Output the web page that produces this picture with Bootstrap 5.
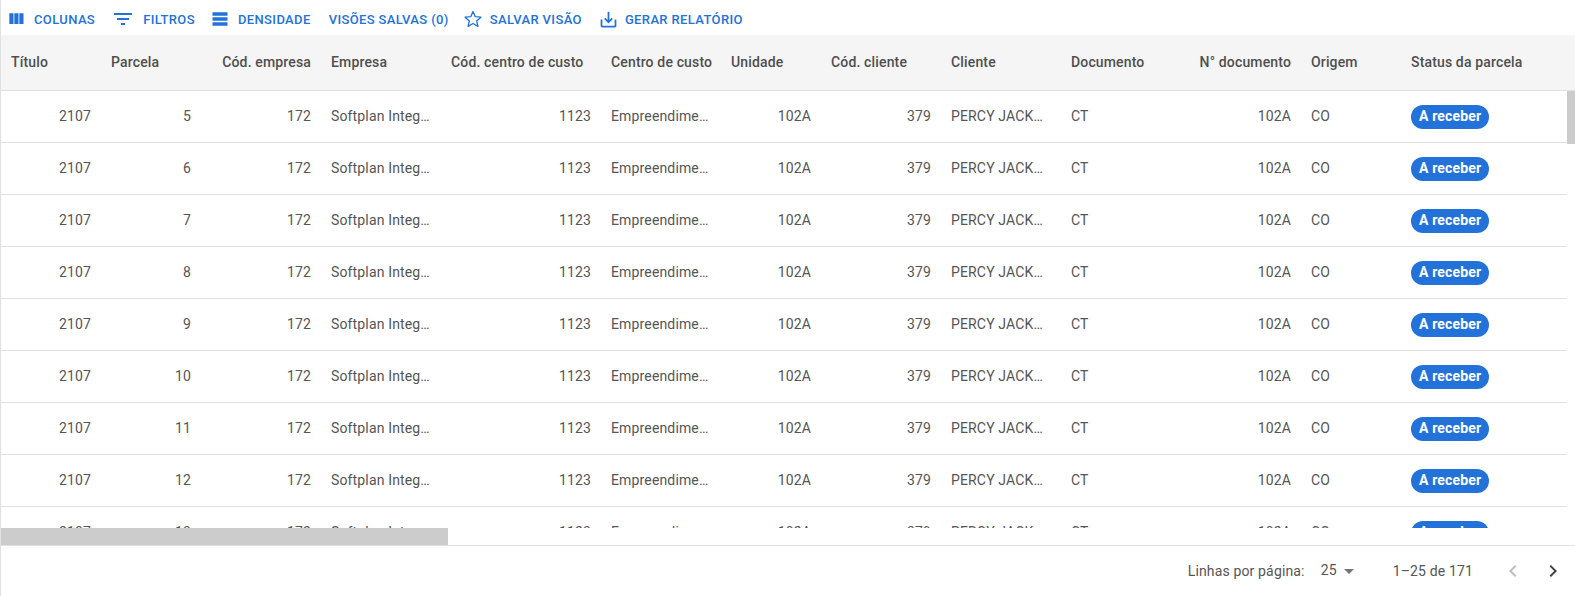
<!DOCTYPE html>
<html lang="pt-BR">
<head>
  <meta charset="UTF-8" />
  <meta name="viewport" content="width=device-width, initial-scale=1.0"/>
  <title>Parcelas</title>
  <link href="https://cdn.jsdelivr.net/npm/bootstrap@5.3.0/dist/css/bootstrap.min.css" rel="stylesheet"/>
  <style>
    html, body { height: 100%; overflow: hidden; }
    body { background: #fff; font-family: Roboto, "Liberation Sans", sans-serif; font-size: 14px; letter-spacing: .15px; color: #555; }
    .grid-root { height: 596px; border-left: 1px solid #e0e0e0; }
    .grid-toolbar { height: 35px; padding: 3px 0 0 5px; }
    .tool-btn { border: 0; background: none; padding: 0; color: #2272d9; font-size: 13px; font-weight: 500; letter-spacing: .37px; text-transform: uppercase; line-height: 1; }
    .tool-btn svg { fill: currentColor; display: block; flex: none; margin-right: 8px; }
    .tool-btn svg.star-line { fill: none; stroke: currentColor; stroke-width: 1.6; stroke-linejoin: round; margin-right: 7px; }
    .tool-btn svg.save-icon { margin-right: 6px; }
    .tool-gap { margin-left: 16px; }
    .tool-gap-md { margin-left: 15px; }
    .tool-gap-lg { margin-left: 18px; }
    .tool-gap-sm { margin-left: 14px; }
    .grid-head { height: 56px; background: #f5f5f5; border-bottom: 1px solid #e0e0e0; }
    .grid-table { --bs-table-color: #555; --bs-table-bg: transparent; table-layout: fixed; width: 1566px; margin: 0; border-collapse: separate; border-spacing: 0; }
    .grid-table > * > * > td, .grid-table > * > * > th { padding: 0 10px; white-space: nowrap; vertical-align: middle; box-shadow: none; }
    .grid-table > * > * > td { height: 52px; overflow: hidden; text-overflow: ellipsis; border-bottom: 1px solid #e0e0e0; }
    .grid-table > * > * > th { height: 55px; font-weight: 500; color: #4f4f4f; border: 0; }
    .body-clip { height: 437px; overflow: hidden; }
    .status-chip { display: inline-block; height: 24px; line-height: 23px; padding: 0 8px; border-radius: 12px; background: #2272d9; color: #fff; font-size: 14px; font-weight: 700; }
    .v-thumb { position: absolute; top: 0; right: 0; width: 8px; height: 53px; background: #ccc; }
    .h-track { height: 18px; border-bottom: 1px solid #e0e0e0; }
    .h-thumb { width: 447px; height: 17px; background: #ccc; }
    .grid-foot { height: 50px; padding-right: 10px; color: #555; }
    .page-size { margin-left: 16px; margin-top: -2px; }
    .page-range { margin-left: 32px; }
    .page-btn { border: 0; background: none; padding: 0; width: 24px; height: 24px; }
    .page-btn svg { display: block; }
    .page-prev { margin: 0 16px 0 28px; }
    .c-100 { width: 100px; } .c-120 { width: 120px; } .c-160 { width: 160px; }
  </style>
</head>
<body>
  <div class="grid-root d-flex flex-column">
    <div class="grid-toolbar d-flex align-items-center">
      <button class="tool-btn d-flex align-items-center"><svg width="20" height="20" viewBox="0 0 24 24"><path d="M10 18h5V5h-5v13zm-6 0h5V5H4v13zM16 5v13h5V5h-5z"/></svg><span>Colunas</span></button>
      <button class="tool-btn tool-gap d-flex align-items-center"><svg width="24" height="24" viewBox="0 0 24 24"><path d="M10 18h4v-2h-4v2zM3 6v2h18V6H3zm3 7h12v-2H6v2z"/></svg><span>Filtros</span></button>
      <button class="tool-btn tool-gap-md d-flex align-items-center"><svg width="20" height="20" viewBox="0 0 24 24"><path d="M21 8H3V4h18v4zm0 2H3v4h18v-4zm0 6H3v4h18v-4z"/></svg><span>Densidade</span></button>
      <button class="tool-btn tool-gap-lg">Visões salvas (0)</button>
      <button class="tool-btn tool-gap-sm d-flex align-items-center"><svg class="star-line" width="20" height="20" viewBox="0 0 24 24"><path d="M12 3l2.7 6.2 6.8.6-5.1 4.5 1.5 6.6-5.9-3.5-5.9 3.5 1.5-6.6-5.1-4.5 6.8-.6z"/></svg><span>Salvar visão</span></button>
      <button class="tool-btn tool-gap d-flex align-items-center"><svg class="save-icon" width="21" height="21" viewBox="0 0 24 24"><path d="M19 12v7H5v-7H3v7c0 1.1.9 2 2 2h14c1.1 0 2-.9 2-2v-7h-2zm-6 .67l2.59-2.58L17 11.5l-5 5-5-5 1.41-1.41L11 12.67V3h2z"/></svg><span>Gerar relatório</span></button>
    </div>

    <div class="grid-head">
      <table class="table grid-table">
        <colgroup><col class="c-100"><col class="c-100"><col class="c-120"><col class="c-120"><col class="c-160"><col class="c-120"><col class="c-100"><col class="c-120"><col class="c-120"><col class="c-120"><col class="c-120"><col class="c-100"><col></colgroup>
        <thead><tr><th>Título</th><th>Parcela</th><th class="text-end">Cód. empresa</th><th>Empresa</th><th>Cód. centro de custo</th><th>Centro de custo</th><th>Unidade</th><th>Cód. cliente</th><th>Cliente</th><th>Documento</th><th class="text-end">N° documento</th><th>Origem</th><th>Status da parcela</th></tr></thead>
      </table>
    </div>

    <div class="position-relative body-clip">
      <table class="table grid-table">
        <colgroup><col class="c-100"><col class="c-100"><col class="c-120"><col class="c-120"><col class="c-160"><col class="c-120"><col class="c-100"><col class="c-120"><col class="c-120"><col class="c-120"><col class="c-120"><col class="c-100"><col></colgroup>
        <tbody>
          <tr><td class="text-end">2107</td><td class="text-end">5</td><td class="text-end">172</td><td>Softplan Integração</td><td class="text-end">1123</td><td>Empreendimento</td><td class="text-end">102A</td><td class="text-end">379</td><td>PERCY JACKSON</td><td>CT</td><td class="text-end">102A</td><td>CO</td><td><span class="status-chip">A receber</span></td></tr>
          <tr><td class="text-end">2107</td><td class="text-end">6</td><td class="text-end">172</td><td>Softplan Integração</td><td class="text-end">1123</td><td>Empreendimento</td><td class="text-end">102A</td><td class="text-end">379</td><td>PERCY JACKSON</td><td>CT</td><td class="text-end">102A</td><td>CO</td><td><span class="status-chip">A receber</span></td></tr>
          <tr><td class="text-end">2107</td><td class="text-end">7</td><td class="text-end">172</td><td>Softplan Integração</td><td class="text-end">1123</td><td>Empreendimento</td><td class="text-end">102A</td><td class="text-end">379</td><td>PERCY JACKSON</td><td>CT</td><td class="text-end">102A</td><td>CO</td><td><span class="status-chip">A receber</span></td></tr>
          <tr><td class="text-end">2107</td><td class="text-end">8</td><td class="text-end">172</td><td>Softplan Integração</td><td class="text-end">1123</td><td>Empreendimento</td><td class="text-end">102A</td><td class="text-end">379</td><td>PERCY JACKSON</td><td>CT</td><td class="text-end">102A</td><td>CO</td><td><span class="status-chip">A receber</span></td></tr>
          <tr><td class="text-end">2107</td><td class="text-end">9</td><td class="text-end">172</td><td>Softplan Integração</td><td class="text-end">1123</td><td>Empreendimento</td><td class="text-end">102A</td><td class="text-end">379</td><td>PERCY JACKSON</td><td>CT</td><td class="text-end">102A</td><td>CO</td><td><span class="status-chip">A receber</span></td></tr>
          <tr><td class="text-end">2107</td><td class="text-end">10</td><td class="text-end">172</td><td>Softplan Integração</td><td class="text-end">1123</td><td>Empreendimento</td><td class="text-end">102A</td><td class="text-end">379</td><td>PERCY JACKSON</td><td>CT</td><td class="text-end">102A</td><td>CO</td><td><span class="status-chip">A receber</span></td></tr>
          <tr><td class="text-end">2107</td><td class="text-end">11</td><td class="text-end">172</td><td>Softplan Integração</td><td class="text-end">1123</td><td>Empreendimento</td><td class="text-end">102A</td><td class="text-end">379</td><td>PERCY JACKSON</td><td>CT</td><td class="text-end">102A</td><td>CO</td><td><span class="status-chip">A receber</span></td></tr>
          <tr><td class="text-end">2107</td><td class="text-end">12</td><td class="text-end">172</td><td>Softplan Integração</td><td class="text-end">1123</td><td>Empreendimento</td><td class="text-end">102A</td><td class="text-end">379</td><td>PERCY JACKSON</td><td>CT</td><td class="text-end">102A</td><td>CO</td><td><span class="status-chip">A receber</span></td></tr>
          <tr><td class="text-end">2107</td><td class="text-end">13</td><td class="text-end">172</td><td>Softplan Integração</td><td class="text-end">1123</td><td>Empreendimento</td><td class="text-end">102A</td><td class="text-end">379</td><td>PERCY JACKSON</td><td>CT</td><td class="text-end">102A</td><td>CO</td><td><span class="status-chip">A receber</span></td></tr>
        </tbody>
      </table>
      <div class="v-thumb"></div>
    </div>

    <div class="h-track"><div class="h-thumb"></div></div>

    <div class="grid-foot d-flex align-items-center justify-content-end">
      <span>Linhas por página:</span>
      <span class="page-size">25</span>
      <svg width="24" height="24" viewBox="0 0 24 24" fill="#757575"><path d="M7 10l5 5 5-5z"/></svg>
      <span class="page-range">1–25 de 171</span>
      <button class="page-btn page-prev"><svg width="24" height="24" viewBox="0 0 24 24" fill="#bdbdbd"><path d="M15.41 7.41L14 6l-6 6 6 6 1.41-1.41L10.83 12z"/></svg></button>
      <button class="page-btn"><svg width="24" height="24" viewBox="0 0 24 24" fill="#444"><path d="M10 6L8.59 7.41 13.17 12l-4.58 4.59L10 18l6-6z"/></svg></button>
    </div>
  </div>
<script src="https://cdn.jsdelivr.net/npm/bootstrap@5.3.0/dist/js/bootstrap.bundle.min.js"></script>
</body>
</html>
